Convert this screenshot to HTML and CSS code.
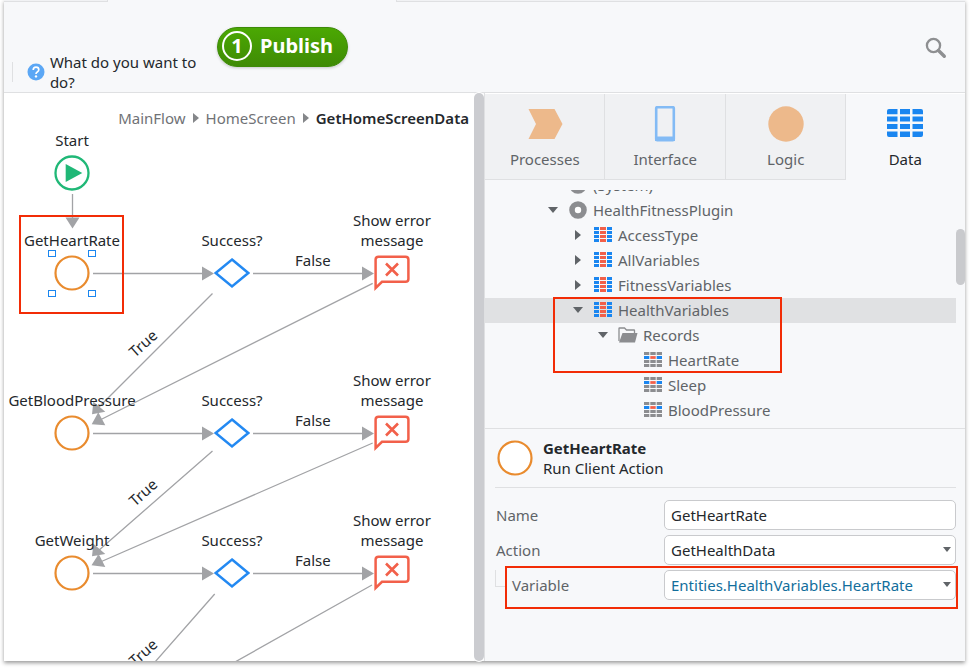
FILE: index.html
```html
<!DOCTYPE html>
<html lang="en">
<head>
<meta charset="utf-8">
<title>GetHomeScreenData</title>
<link rel="stylesheet" href="styles.css">
</head>
<body>
<svg class="defs" aria-hidden="true">
  <symbol id="action" viewBox="0 0 36 36"><circle cx="18" cy="18" r="16.5" fill="#fff" stroke="#e98b2e" stroke-width="2.2"/></symbol>
  <symbol id="decision" viewBox="0 0 36 36"><path d="M18 4.500 34.300 18 18 31.500 1.700 18Z" fill="#fff" stroke="#2389f2" stroke-width="2.5"/></symbol>
  <symbol id="message" viewBox="0 0 36 36"><path d="M1.600 33V4.500Q1.600 1.700 4.500 1.700H31.500Q34.400 1.700 34.400 4.500V24Q34.400 26.800 31.500 26.800H8Z" fill="#fff" stroke="#f2604a" stroke-width="2.5"/><path d="M12 8.500 24 20.500M24 8.500 12 20.500" stroke="#f2604a" stroke-width="2.6"/></symbol>
  <symbol id="entity" viewBox="0 0 18 15">
    <path d="M0 1.500H5M13 1.500H18M0 5.500H5M13 5.500H18M0 9.500H5M13 9.500H18M0 13.500H5M13 13.500H18" stroke="#1a86f0" stroke-width="2.8"/>
    <path d="M6 1.500H12M6 5.500H12M6 9.500H12M6 13.500H12" stroke="#f2604a" stroke-width="2.8"/>
  </symbol>
  <symbol id="record" viewBox="0 0 18 15">
    <path d="M0 1.500H5.300M6.300 1.500H11.700M12.700 1.500H18M0 9.500H5.300M6.300 9.500H11.700M12.700 9.500H18M0 13.500H5.300M6.300 13.500H11.700M12.700 13.500H18" stroke="#8c8d90" stroke-width="2.8"/>
    <path d="M0 5.500H5.300M12.700 5.500H18" stroke="#1a86f0" stroke-width="2.8"/><path d="M6.300 5.500H11.700" stroke="#f2604a" stroke-width="2.8"/>
  </symbol>
  <symbol id="module" viewBox="0 0 18 18"><circle cx="9" cy="9" r="6" fill="#fff" stroke="#8c8d90" stroke-width="5.600"/></symbol>
  <symbol id="open" viewBox="0 0 10 6"><path d="M0 0H10L5 6Z" fill="#606468"/></symbol>
  <symbol id="closed" viewBox="0 0 6 10"><path d="M0 0V10L6 5Z" fill="#606468"/></symbol>
</svg>

<div class="window">
  <header class="header">
    <div class="tabstrip"><span class="tab-edge tab-first"></span><span class="tab-edge tab-rest"></span></div>
    <div class="toolbar">
      <div class="help">
        <svg class="help-icon" viewBox="0 0 18 18" aria-hidden="true"><circle cx="9" cy="9" r="8.500" fill="#5ba7f5"/><path d="M6.200 7Q6.200 4.200 9 4.200T11.800 6.800Q11.800 8 10.300 8.900Q9 9.700 9 10.900" fill="none" stroke="#fff" stroke-width="1.700"/><circle cx="9" cy="13.400" r="1.200" fill="#fff"/></svg>
        <span>What do you want to do?</span>
      </div>
      <button class="publish" type="button"><span class="publish-count">1</span><span>Publish</span></button>
      <button class="search" type="button" aria-label="Search"><svg viewBox="0 0 22 22"><circle cx="8.500" cy="8.500" r="6.600" fill="none" stroke="#8e8f91" stroke-width="2.300"/><path d="M13.500 13.500 19.300 19.300" stroke="#8e8f91" stroke-width="3.400" stroke-linecap="round"/></svg></button>
    </div>
  </header>

  <main class="workspace">
    <section class="canvas">
      <nav class="crumbs">
        <a href="#">MainFlow</a><svg viewBox="0 0 6 10"><path d="M0 0V10L6 5Z" fill="#85878a"/></svg><a href="#">HomeScreen</a><svg viewBox="0 0 6 10"><path d="M0 0V10L6 5Z" fill="#85878a"/></svg><strong>GetHomeScreenData</strong>
      </nav>
      <div class="flow">
        <svg class="edges" viewBox="4 93 470 568" aria-hidden="true">
          <g stroke="#a2a3a6" stroke-width="1.300" fill="none">
            <path d="M72.500 194V220M93 273.500H204M253 273.500H364M93 433.500H204M253 433.500H364M93 573.500H204M253 573.500H364"/>
            <path d="M212.500 293.500 98 408M372.700 283.300 98 421M212.500 451 98 551M372.700 443 98 563M214.700 594 155 662M372 585 235 662"/>
          </g>
          <g fill="#a2a3a6">
            <path d="M65.500 217.500H79.500L72.500 228.500Z"/>
            <path d="M202 266.500V280.500L214 273.500ZM362 266.500V280.500L374 273.500Z"/>
            <path d="M202 426.500V440.500L214 433.500ZM362 426.500V440.500L374 433.500Z"/>
            <path d="M202 566.500V580.500L214 573.500ZM362 566.500V580.500L374 573.500Z"/>
            <path d="M92 414.300 93.400 401.700 105.300 411.700ZM91.700 424.300 98.300 412.300 105.300 425.300Z"/>
            <path d="M92 556.300 93.400 543.700 105.300 554ZM91.500 565.300 98.700 554 105.300 567Z"/>
          </g>
        </svg>

        <div class="node col-1 row-0"><span>Start</span><svg viewBox="0 0 36 36"><circle cx="18" cy="18" r="16.500" fill="#fff" stroke="#20b877" stroke-width="2.300"/><path d="M11.700 9V27L28.300 18Z" fill="#20b877"/></svg></div>

        <div class="node col-1 row-1"><span>GetHeartRate</span><svg><use href="#action"/></svg></div>
        <div class="handles"><i></i><i></i><i></i><i></i></div>
        <div class="node col-2 row-1"><span>Success?</span><svg><use href="#decision"/></svg></div>
        <div class="node col-3 row-1"><span>Show error message</span><svg><use href="#message"/></svg></div>

        <div class="node col-1 row-2"><span>GetBloodPressure</span><svg><use href="#action"/></svg></div>
        <div class="node col-2 row-2"><span>Success?</span><svg><use href="#decision"/></svg></div>
        <div class="node col-3 row-2"><span>Show error message</span><svg><use href="#message"/></svg></div>

        <div class="node col-1 row-3"><span>GetWeight</span><svg><use href="#action"/></svg></div>
        <div class="node col-2 row-3"><span>Success?</span><svg><use href="#decision"/></svg></div>
        <div class="node col-3 row-3"><span>Show error message</span><svg><use href="#message"/></svg></div>

        <span class="edge-label no row-1">False</span>
        <span class="edge-label no row-2">False</span>
        <span class="edge-label no row-3">False</span>
        <span class="edge-label yes yes-1">True</span>
        <span class="edge-label yes yes-2">True</span>
        <span class="edge-label yes yes-3">True</span>
        <div class="mark mark-node"></div>
      </div>
    </section>

    <div class="splitter"></div>

    <aside class="panel">
      <nav class="layers">
        <button type="button"><svg viewBox="0 0 36 36"><path d="M1.500 3H27.500L35.500 18 27.500 33H1.500L9 18Z" fill="#edb98b"/></svg>Processes</button>
        <button type="button"><svg viewBox="0 0 36 36"><rect x="9.200" y="1.200" width="17.600" height="33" rx="1" fill="none" stroke="#83bbf5" stroke-width="2.600"/><path d="M9 31.500H27V34H9Z" fill="#83bbf5" stroke="#83bbf5" stroke-width="2"/></svg>Interface</button>
        <button type="button"><svg viewBox="0 0 36 36"><circle cx="18" cy="18" r="17.700" fill="#edb98b"/></svg>Logic</button>
        <button type="button" class="active"><svg viewBox="0 0 36 36"><path d="M2 3H10.500V8.200H0V5Q0 3 2 3ZM13 3H23V8.200H13ZM25.500 3H34Q36 3 36 5V8.200H25.500ZM0 10.500H10.500V15.500H0ZM13 10.500H23V15.500H13ZM25.500 10.500H36V15.500H25.500ZM0 18H10.500V23H0ZM13 18H23V23H13ZM25.500 18H36V23H25.500ZM0 25.500H10.500V31H2Q0 31 0 29ZM13 25.500H23V31H13ZM25.500 25.500H36V29Q36 31 34 31H25.500Z" fill="#1a86f0"/></svg>Data</button>
      </nav>

      <div class="tree-view">
        <ul class="tree">
          <li class="level-0"><span class="toggle"></span><span class="icon"><svg class="round"><use href="#module"/></svg></span>(System)</li>
          <li class="level-0"><span class="toggle"><svg class="down"><use href="#open"/></svg></span><span class="icon"><svg class="round"><use href="#module"/></svg></span>HealthFitnessPlugin</li>
          <li class="level-1"><span class="toggle"><svg class="side"><use href="#closed"/></svg></span><span class="icon"><svg><use href="#entity"/></svg></span>AccessType</li>
          <li class="level-1"><span class="toggle"><svg class="side"><use href="#closed"/></svg></span><span class="icon"><svg><use href="#entity"/></svg></span>AllVariables</li>
          <li class="level-1"><span class="toggle"><svg class="side"><use href="#closed"/></svg></span><span class="icon"><svg><use href="#entity"/></svg></span>FitnessVariables</li>
          <li class="level-1 selected"><span class="toggle"><svg class="down"><use href="#open"/></svg></span><span class="icon"><svg><use href="#entity"/></svg></span>HealthVariables</li>
          <li class="level-2"><span class="toggle"><svg class="down"><use href="#open"/></svg></span><span class="icon"><svg class="folder" viewBox="0 0 20 16"><path d="M1 14V1.500Q1 1 1.500 1H6.500L8.500 3H16Q16.500 3 16.500 3.500V6" fill="none" stroke="#8c8d90" stroke-width="1.300"/><path d="M4.500 6H19.500L17 15.500H1Z" fill="#8c8d90"/></svg></span>Records</li>
          <li class="level-3"><span class="toggle"></span><span class="icon"><svg><use href="#record"/></svg></span>HeartRate</li>
          <li class="level-3"><span class="toggle"></span><span class="icon"><svg><use href="#record"/></svg></span>Sleep</li>
          <li class="level-3"><span class="toggle"></span><span class="icon"><svg><use href="#record"/></svg></span>BloodPressure</li>
        </ul>
        <div class="thumb"></div>
        <div class="mark mark-tree"></div>
      </div>

      <form class="properties">
        <div class="subject">
          <svg><use href="#action"/></svg>
          <div><strong>GetHeartRate</strong><br>Run Client Action</div>
        </div>
        <div class="field">
          <label for="name">Name</label>
          <input id="name" type="text" value="GetHeartRate">
        </div>
        <div class="field">
          <label for="action-name">Action</label>
          <div class="drop"><select id="action-name"><option>GetHealthData</option></select><svg><use href="#open"/></svg></div>
        </div>
        <div class="field nested">
          <label for="variable">Variable</label>
          <div class="drop"><select id="variable" class="reference"><option>Entities.HealthVariables.HeartRate</option></select><svg><use href="#open"/></svg></div>
          <div class="mark mark-field"></div>
        </div>
      </form>
    </aside>
  </main>
</div>
</body>
</html>
```
FILE: styles.css
```css
* { box-sizing: border-box; }

body {
  margin: 0;
  background: #fff;
  color: #24282c;
  font: 15px/20px "Noto Sans", "Open Sans", sans-serif;
  overflow: hidden;
}

button, input, select { font: inherit; color: inherit; margin: 0; }
svg { display: block; flex: none; }
.defs { position: absolute; width: 0; height: 0; }

.window {
  display: flex;
  flex-direction: column;
  height: calc(100vh - 8px);
  margin: 0 5px 8px 4px;
  background: #f7f8fa;
  box-shadow: 0 2px 4px rgba(0, 0, 0, 0.4);
}

/* header */
.header { flex: none; border-bottom: 1px solid #dfe0e2; }
.tabstrip { display: flex; justify-content: space-between; height: 2px; }
.tab-edge { background: #f1f2f4; border-bottom: 1px solid #dfe0e2; }
.tab-first { flex: 103; border-right: 1px solid #dfe0e2; }
.tab-rest { flex: 571; margin-left: 30%; border-left: 1px solid #dfe0e2; }
.toolbar { display: flex; height: 90px; padding: 0 18px 0 8px; }
.help { display: flex; align-items: center; align-self: flex-end; height: 40px; width: 190px; gap: 5px; }
.help::before { content: ""; width: 1px; height: 20px; margin-right: 9px; background: #dfe0e2; }
.help-icon { width: 18px; height: 18px; }
.publish {
  display: flex;
  align-items: center;
  gap: 8px;
  height: 40px;
  margin: 25px auto 0 15px;
  padding: 0 14px 2px 4px;
  border: 1px solid #3d8a08;
  border-radius: 20px;
  background: linear-gradient(#4ba803, #3f8b05);
  color: #fff;
  font-size: 20px;
  font-weight: 700;
  box-shadow: 0 1px 3px rgba(0, 0, 0, 0.2);
}
.publish-count { width: 30px; height: 30px; border: 2px solid #fff; border-radius: 50%; line-height: 26px; }
.search { align-self: flex-start; margin-top: 35px; padding: 0; border: 0; background: none; }
.search svg { width: 22px; height: 22px; }

/* workspace */
.workspace { flex: 1; min-height: 0; display: grid; grid-template-columns: minmax(0, 470fr) 10px minmax(0, 481fr); }
.canvas { position: relative; overflow: hidden; background: #fff; }
.splitter { background: #cbccd0; border-radius: 5px; box-shadow: 0 0 0 1px #fff; }
.crumbs { display: flex; justify-content: flex-end; align-items: center; gap: 7px; padding: 15px 5px 0; }
.crumbs a { color: #707276; text-decoration: none; }
.crumbs strong { font-weight: 600; }
.crumbs svg { width: 6px; height: 10px; }

.flow { position: absolute; inset: 0; pointer-events: none; }
.edges { width: 470px; height: 568px; }
.node {
  position: absolute;
  display: flex;
  flex-direction: column;
  justify-content: flex-end;
  align-items: center;
  gap: 5px;
  width: 136px;
  height: 80px;
  text-align: center;
}
.node span { max-width: 100px; display: flex; justify-content: center; }
.node svg { width: 36px; height: 36px; }
.col-1 { left: 0; }
.col-2 { left: 160px; }
.col-3 { left: 320px; }
.row-0 { top: 18px; }
.row-1 { top: 118px; }
.row-2 { top: 278px; }
.row-3 { top: 418px; }
.edge-label { position: absolute; }
.no { left: 291px; margin-top: 39px; }
.yes { left: 123px; transform: rotate(-42deg); }
.yes-1 { top: 240px; }
.yes-2 { top: 389px; }
.yes-3 { top: 549px; }
.handles {
  position: absolute;
  left: 44px;
  top: 157px;
  display: grid;
  grid-template-columns: 8px 8px;
  gap: 33px 32px;
}
.handles i { height: 7px; background: #fff; border: 1px solid #1a86f0; }

.mark { position: absolute; border: 2px solid #f22c06; pointer-events: none; }
.mark-node { left: 15px; top: 122px; width: 105px; height: 99px; }
.mark-tree { left: 68px; top: 107px; width: 229px; height: 76px; }
.mark-field { left: 10px; right: -2px; top: -4px; height: 43px; }

/* side panel */
.panel { display: flex; flex-direction: column; min-width: 0; border-left: 1px solid #dfe0e2; }
.layers { display: grid; grid-template-columns: repeat(3, 121fr) 119fr; height: 87px; border-top: 1px solid #fff; }
.layers button {
  display: flex;
  flex-direction: column;
  align-items: center;
  gap: 7px;
  padding: 12px 0 0;
  border: 0;
  border-right: 1px solid #dfe0e2;
  border-bottom: 1px solid #dfe0e2;
  background: #f0f1f3;
  color: #606468;
}
.layers .active { border-color: transparent; background: none; color: #24282c; }
.layers svg { width: 36px; height: 36px; }

.tree-view { position: relative; flex: none; height: 238px; margin-top: 10px; }
.tree { height: 238px; margin: 0; padding: 0 9px 0 0; overflow: hidden; list-style: none; color: #606468; }
.tree li { display: flex; align-items: center; height: 25px; padding-bottom: 2px; }
.tree li:first-child { margin-top: -17px; }
.tree .selected { background: #e0e1e3; }
.tree .level-0 { padding-left: 55px; }
.tree .level-1 { padding-left: 80px; }
.tree .level-2 { padding-left: 105px; }
.tree .level-3 { padding-left: 130px; }
.toggle, .icon { display: flex; flex: none; justify-content: center; width: 25px; }
.icon { margin-right: 3px; }
.icon svg { width: 18px; height: 15px; }
.icon .round { height: 18px; }
.icon .folder { width: 20px; height: 16px; }
.down { width: 10px; height: 6px; }
.side { width: 6px; height: 10px; }
.thumb { position: absolute; right: 0; top: 39px; width: 9px; height: 56px; border-radius: 5px; background: #c9cacd; }

.properties { display: flex; flex-direction: column; gap: 5px; padding: 0 9px 0 10px; border-top: 1px solid #dfe0e2; }
.subject { display: flex; align-items: center; gap: 10px; height: 59px; margin-bottom: 7px; padding-left: 2px; border-bottom: 1px solid #dfe0e2; }
.subject svg { width: 36px; height: 36px; }
.field { position: relative; display: grid; grid-template-columns: 169px minmax(0, 1fr); align-items: center; height: 30px; }
.field label { padding-left: 1px; color: #606468; }
.field input, .field select {
  width: 100%;
  height: 30px;
  padding: 0 6px;
  border: 1px solid #c9cacd;
  border-radius: 5px;
  background: #fff;
  appearance: none;
}
.field .reference { color: #126e9c; }
.drop { position: relative; }
.drop svg { position: absolute; right: 5px; top: 12px; width: 8px; height: 5px; pointer-events: none; }
.nested label { padding-left: 17px; }
.nested::before { content: ""; position: absolute; left: 0; top: 0; width: 10px; height: 16px; border: solid #dfe0e2; border-width: 0 0 1px 1px; }
```
